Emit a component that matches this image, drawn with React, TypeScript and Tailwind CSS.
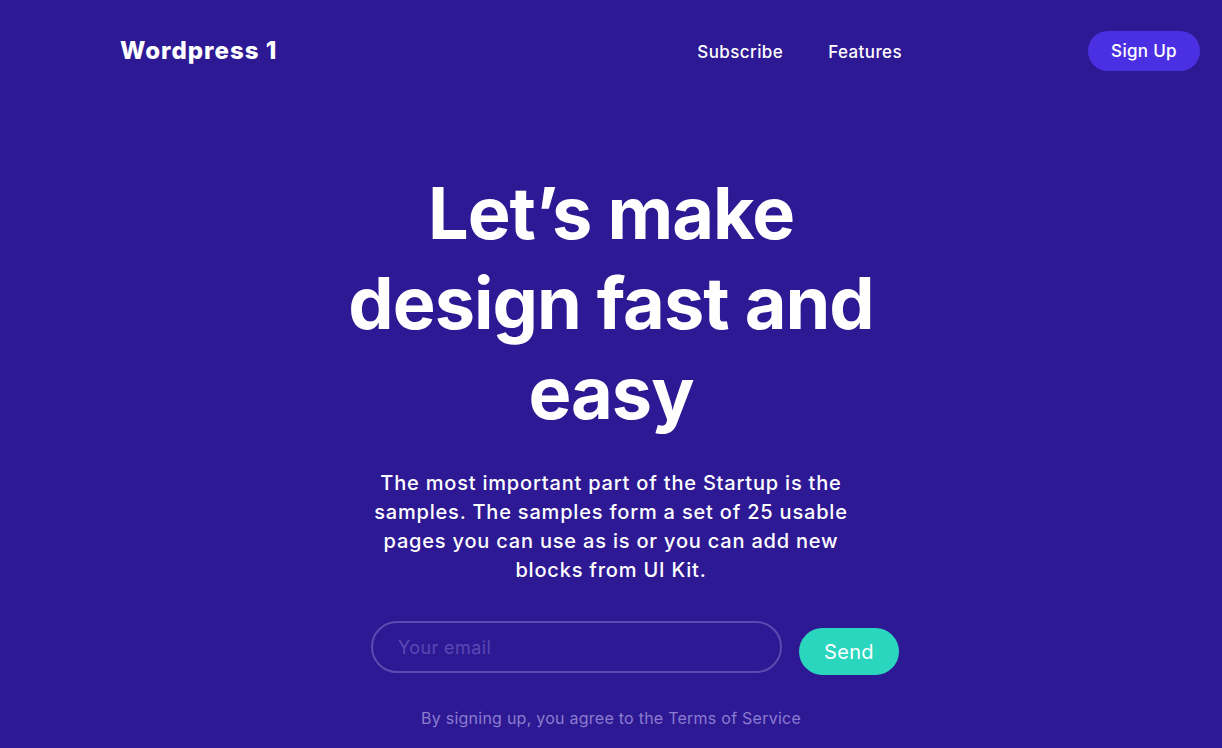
import React from 'react';

export default function App() {
  return (
    <main className="min-h-screen w-full bg-[#2e1994] text-white font-['Inter',sans-serif] overflow-hidden">
      <header className="flex items-center h-[102px] pl-[120px] pr-[22px]">
        <div className="text-[24px] font-extrabold tracking-[1px]">Wordpress 1</div>
        <nav className="flex items-center gap-[45px] ml-[420px] pt-[3px] text-[17px] font-medium tracking-[0.4px]">
          <a href="#" className="hover:underline">Subscribe</a>
          <a href="#" className="hover:underline">Features</a>
        </nav>
        <button className="ml-auto flex h-[40px] w-[112px] items-center justify-center rounded-full bg-[#4b30e3] pt-[1px] text-[17px] font-medium tracking-[0.3px]">
          Sign Up
        </button>
      </header>

      <section className="flex flex-col items-center pt-[66px]">
        <h1 className="w-[560px] text-center text-[72px] leading-[90px] font-bold tracking-[-1px]">
          Let’s make design fast and easy
        </h1>
        <p className="mt-[31px] w-[480px] text-center text-[20px] leading-[29px] font-medium tracking-[0.8px]">
          The most important part of the Startup is the samples. The samples form a set of 25 usable pages you can
          use as is or you can add new blocks from UI Kit.
        </p>

        <form className="mt-[36px] ml-[48px] flex items-start gap-[17px]" onSubmit={(e) => e.preventDefault()}>
          <input
            type="email"
            placeholder="Your email"
            className="h-[52px] w-[411px] rounded-full border-2 border-[#5b4bb0] bg-transparent px-[25px] text-[18px] tracking-[0.4px] text-white placeholder:text-[#5a48b4] outline-none"
          />
          <button type="submit" className="mt-[7px] h-[47px] w-[100px] rounded-full bg-[#2bd6bf] text-[20px] tracking-[0.3px]">
            Send
          </button>
        </form>

        <p className="mt-[31px] text-[16px] tracking-[0.25px] text-[#8a7ccf]">By signing up, you agree to the Terms of Service</p>
      </section>
    </main>
  );
}
